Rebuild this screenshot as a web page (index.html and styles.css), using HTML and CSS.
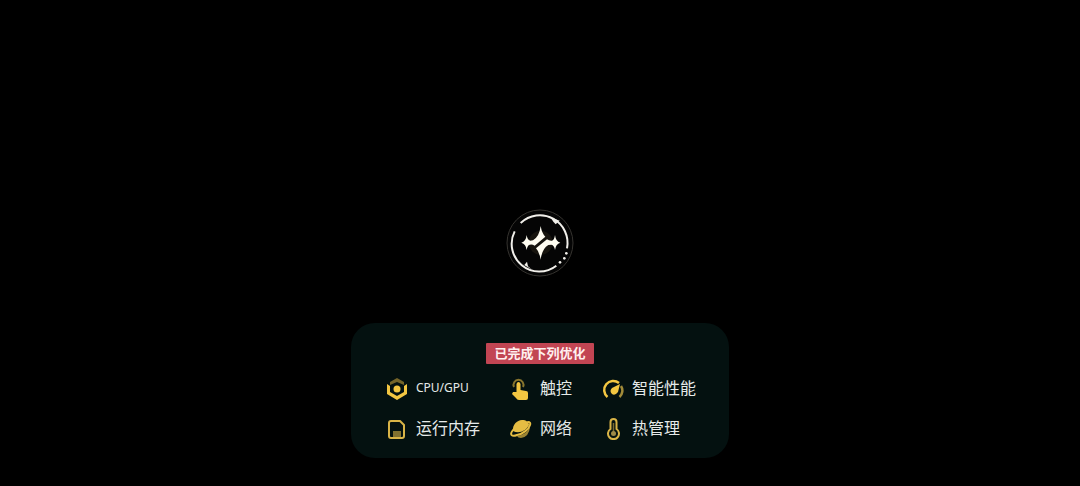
FILE: index.html
```html
<!DOCTYPE html>
<html lang="zh-CN">
<head>
    <meta charset="UTF-8">
    <meta name="viewport" content="width=device-width, initial-scale=1.0">
    <title>性能优化</title>
    <link rel="stylesheet" href="styles.css">
</head>
<body>
    <main class="screen">
        <!-- Emblem -->
        <svg class="emblem" viewBox="33 33 204 204" aria-hidden="true">
            <circle cx="135" cy="135" r="99" fill="#050505" stroke="#35332f" stroke-width="3"/>
            <g fill="none" stroke="#f1efea" stroke-width="6">
                <path d="M77 75A83 83 0 0 1 216 151"/>
                <path d="M59 100A83 83 0 0 0 184 203"/>
            </g>
            <g fill="#f1efea">
                <path d="M166 58L194 68L182 79L175 71Z"/>
                <path d="M78 196L88 201L96 191L99 205L110 214Z"/>
                <circle cx="195" cy="193" r="4"/>
                <circle cx="208" cy="181" r="4"/>
                <circle cx="214" cy="166" r="4"/>
            </g>
            <circle cx="137" cy="134" r="36" fill="#292318" opacity=".5"/>
            <g fill="#fffdf1">
                <path d="M95 111Q97 126 106 128L114 127Q133 116 137 84Q141 107 151 116L119 143Q112 138 104 140Q97 142 95 156Q93 138 79 134Q93 130 95 111Z"/>
                <path d="M180 111Q182 130 196 134Q182 138 180 156Q178 142 169 140L160 141Q141 152 137 185Q133 161 123 151L156 124Q163 129 171 128Q178 126 180 111Z"/>
            </g>
        </svg>

        <!-- Finished optimizations -->
        <section class="panel">
            <h1 class="badge">已完成下列优化</h1>
            <ul class="features">
                <li class="feature">
                    <svg class="icon" viewBox="0 0 22 22" aria-hidden="true">
                        <path fill="#746429" d="M11 0L18 4V7L11 4L4 7V4Z"/>
                        <path fill="#f3c641" d="M1 6L4 8V14L11 18L18 14V8L21 6V16L11 22L1 16Z"/>
                        <circle cx="11" cy="11" r="3.500" fill="#f3c641"/>
                    </svg>
                    <span class="label label-latin">CPU/GPU</span>
                </li>
                <li class="feature">
                    <svg class="icon" viewBox="0 0 22 22" aria-hidden="true">
                        <path fill="none" stroke="#88752e" stroke-width="2" d="M4 9A5 5 0 1 1 13 9"/>
                        <path fill="#f3c641" d="M6.500 6Q7 4 8.500 4Q10 4 10.500 6V12L16 13Q18 13 18 15V20Q18 22 16 22H9Q7 22 6 20L2 16L3 14H6.500Z"/>
                    </svg>
                    <span class="label">触控</span>
                </li>
                <li class="feature">
                    <svg class="icon" viewBox="0 0 22 22" aria-hidden="true">
                        <path fill="none" stroke="#f3c641" stroke-width="2.500" d="M5.500 19A8.500 8.500 0 0 1 17 5"/>
                        <path fill="none" stroke="#a28b39" stroke-width="2.500" d="M19 8A8.500 8.500 0 0 1 17.500 19"/>
                        <path fill="#f3c641" d="M18 6L16 14Q13 18 10 16Q7 13 10 10Z"/>
                    </svg>
                    <span class="label">智能性能</span>
                </li>
                <li class="feature">
                    <svg class="icon" viewBox="0 0 22 22" aria-hidden="true">
                        <path fill="none" stroke="#d9b447" stroke-width="2" stroke-linejoin="round" d="M5 3H14L18 7V18Q18 20 16 20H5Q3 20 3 18V5Q3 3 5 3Z"/>
                        <path fill="#81702f" d="M7 13H15V19H7Z"/>
                    </svg>
                    <span class="label">运行内存</span>
                </li>
                <li class="feature">
                    <svg class="icon" viewBox="0 0 22 22" aria-hidden="true">
                        <path fill="#9c8433" d="M7 18Q16 17 20 9Q19 19 11 20Q8 20 7 18Z"/>
                        <path fill="#e5bd43" d="M3 13C2 7 7 2 12 2C16 2 19 4 19 7C16 13 9 16 3 13Z"/>
                        <path fill="none" stroke="#e5bd43" stroke-width="2" stroke-linecap="round" d="M3 12C-1 17 2 19 7 17C13 16 19 11 20 7Q21 4 18 4"/>
                    </svg>
                    <span class="label">网络</span>
                </li>
                <li class="feature">
                    <svg class="icon" viewBox="0 0 22 22" aria-hidden="true">
                        <path fill="none" stroke="#d9b447" stroke-width="2" d="M8.500 11V4A3 3 0 0 1 14.500 4V11A5.500 5.500 0 1 1 8.500 11Z"/>
                        <path stroke="#796a31" stroke-width="1.500" d="M11.500 5V14"/>
                        <circle cx="11.500" cy="15.500" r="2.500" fill="#9e8a48"/>
                    </svg>
                    <span class="label">热管理</span>
                </li>
            </ul>
        </section>
    </main>
</body>
</html>
```
FILE: styles.css
```css
body {
    margin: 0;
    background-color: #000;
    color: #e6eae9;
    font-family: "Noto Sans CJK SC", sans-serif;
}
.screen {
    display: grid;
    grid-template-rows: 1fr auto 1fr;
    justify-items: center;
    min-height: 100vh;
}
.emblem {
    grid-row: 2;
    width: 68px;
    height: 68px;
}
.panel {
    grid-row: 3;
    align-self: start;
    display: flex;
    flex-direction: column;
    align-items: center;
    margin: 46px 0 28px;
    padding: 20px 33px 18px;
    border-radius: 24px;
    background-color: #041110;
}
.badge {
    margin: 0 0 14px;
    padding: 0 8px 2px;
    border-radius: 1px;
    background-color: #c24553;
    color: #fff0ef;
    font-size: 13px;
    font-weight: 700;
    line-height: 19px;
}
.features {
    display: grid;
    grid-template-columns: repeat(3, auto);
    gap: 18px 30px;
    margin: 0;
    padding: 0 0 0 2px;
    list-style: none;
}
.feature {
    display: flex;
    align-items: flex-start;
    gap: 8px;
}
.icon {
    width: 22px;
    height: 22px;
}
.label {
    font-size: 16px;
    line-height: 18px;
}
.label-latin {
    font-family: "Noto Sans", sans-serif;
    font-size: 12px;
    line-height: 20px;
}
```
